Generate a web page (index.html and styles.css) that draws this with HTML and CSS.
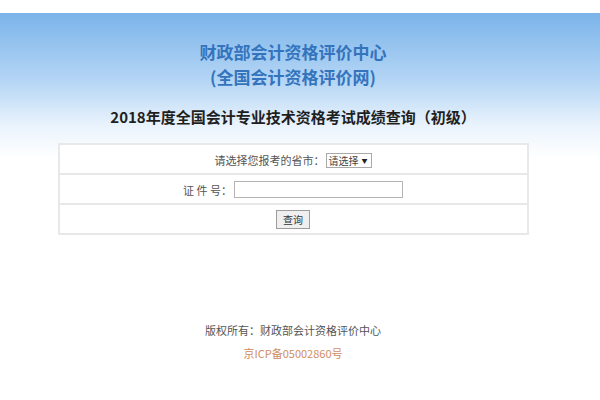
FILE: index.html
```html
<!DOCTYPE html>
<html lang="zh-CN">
<head>
<meta charset="utf-8">
<title>2018年度全国会计专业技术资格考试成绩查询</title>
<link rel="stylesheet" href="styles.css">
</head>
<body>
<div class="banner">
  <div class="page">
    <h1 class="org"><span class="org-line">财政部会计资格评价中心</span><span class="org-line">(全国会计资格评价网)</span></h1>
    <h2 class="heading">2018年度全国会计专业技术资格考试成绩查询（初级）</h2>
    <table class="form">
      <tr>
        <td><span class="label">请选择您报考的省市：</span><span class="select">请选择<span class="arrow">▼</span></span></td>
      </tr>
      <tr>
        <td><span class="label">证 件 号：</span><span class="input"></span></td>
      </tr>
      <tr>
        <td><button class="btn" type="button">查询</button></td>
      </tr>
    </table>
  </div>
</div>
<div class="page footer">
  <p class="copy">版权所有：财政部会计资格评价中心</p>
  <p class="icp">京ICP备05002860号</p>
</div>
</body>
</html>
```

FILE: styles.css
```css
html, body {
  margin: 0;
  padding: 0;
  background: #ffffff;
}
body {
  padding-top: 13px;
  font-family: "Noto Sans CJK SC", "Noto Sans", sans-serif;
}
.banner {
  background: linear-gradient(to bottom, #7ab4ea 0px, #b7d7f5 70px, #e9f3fc 112px, #ffffff 145px);
  padding-top: 26px;
}
.page {
  width: 586px;
}
.org {
  margin: 0;
  text-align: center;
  font-size: 17px;
  font-weight: bold;
  color: #3474bd;
}
.org-line {
  display: block;
  line-height: 25px;
}
.heading {
  margin: 17px 0 0;
  text-align: center;
  font-size: 15px;
  line-height: 22px;
  font-weight: bold;
  color: #1f1f1f;
}
.form {
  margin: 15px auto 0;
  width: 471px;
  border-collapse: collapse;
  background: #ffffff;
}
.form td {
  border: 2px solid #e6e8ea;
  height: 26px;
  padding: 1px 0;
  text-align: center;
  font-size: 11px;
  color: #555;
  vertical-align: middle;
}
.label {
  vertical-align: middle;
}
.select {
  display: inline-block;
  vertical-align: middle;
  margin-left: 1px;
  width: 42px;
  height: 13px;
  line-height: 13px;
  border: 1px solid #a9a9a9;
  font-size: 10px;
  color: #444;
  text-align: left;
  padding-left: 2px;
  position: relative;
}
.arrow {
  position: absolute;
  right: 3px;
  top: 0;
  font-size: 6px;
  color: #222;
}
.input {
  display: inline-block;
  vertical-align: middle;
  margin-left: 2px;
  width: 167px;
  height: 15px;
  border: 1px solid #b5b5b5;
  background: #fff;
}
.btn {
  width: 34px;
  height: 19px;
  padding: 0;
  font-family: "Noto Sans CJK SC", sans-serif;
  font-size: 10px;
  color: #333;
  background: #efefef;
  border: 1px solid #9c9c9c;
  vertical-align: middle;
}
.footer {
  padding-top: 87px;
  text-align: center;
}
.copy {
  margin: 0;
  font-size: 11px;
  line-height: 16px;
  color: #555;
}
.icp {
  margin: 7px 0 0;
  font-size: 11px;
  line-height: 16px;
  color: #d08e62;
}
```
